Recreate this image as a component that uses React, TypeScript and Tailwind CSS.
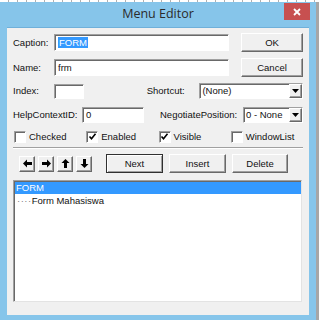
import React from 'react';

// Windows classic 3D borders
const sunken =
  'border border-t-[#a0a0a0] border-l-[#a0a0a0] border-r-white border-b-white shadow-[inset_1px_1px_0_#696969]';
const raised =
  'bg-[#f0f0f0] border border-t-white border-l-white border-r-[#696969] border-b-[#696969] shadow-[inset_-1px_-1px_0_#a0a0a0]';

const Arrow: React.FC<{ rotate: string }> = ({ rotate }) => (
  <svg width="9" height="9" viewBox="0 0 9 9" className={rotate}>
    <polygon points="0,4.5 4,0.5 4,3 9,3 9,6 4,6 4,8.5" fill="#000" />
  </svg>
);

const Combo: React.FC<{ text: string; width: string }> = ({ text, width }) => (
  <div className={`${width} h-[16px] bg-white ${sunken} flex items-center justify-between`}>
    <span className="pl-[2px]">{text}</span>
    <div className={`w-[13px] h-full ${raised} flex items-center justify-center`}>
      <svg width="7" height="4" viewBox="0 0 7 4">
        <polygon points="0,0 7,0 3.5,4" fill="#000" />
      </svg>
    </div>
  </div>
);

const Check: React.FC<{ label: string; checked?: boolean }> = ({ label, checked }) => (
  <div className="w-[74px] flex items-center gap-[3px]">
    <div className={`w-[12px] h-[12px] bg-white ${sunken} flex items-center justify-center`}>
      {checked && (
        <svg width="9" height="9" viewBox="0 0 9 9">
          <path d="M1.5 4.5 L3.5 6.8 L7.5 1.8" stroke="#000" strokeWidth="1.6" fill="none" />
        </svg>
      )}
    </div>
    <span>{label}</span>
  </div>
);

const App: React.FC = () => {
  return (
    <div className="w-[319px] h-[320px] overflow-hidden flex flex-col bg-[#a6a6a6]">
      {/* strip of desktop above the window */}
      <div className="h-[2px] bg-[repeating-linear-gradient(90deg,#ffffff_0px,#ffffff_8px,#b0b0b0_8px,#b0b0b0_9px)] shrink-0" />
      <div className="flex flex-1">
        {/* window */}
        <div className="w-[316px] bg-[#86c5ea] flex flex-col">
          {/* title bar */}
          <div className="h-[25px] grid grid-cols-[1fr_auto_1fr]">
            <div />
            <div className="flex items-center text-[12.5px] text-[#2b2b2b] font-['Open_Sans',sans-serif]">
              Menu Editor
            </div>
            <div className="flex justify-end pt-[1px] pr-[6px]">
              <div className="w-[26px] h-[17px] bg-[#c75050] flex items-center justify-center">
                <svg width="8" height="8" viewBox="0 0 8 8">
                  <path d="M1 1 L7 7 M7 1 L1 7" stroke="#fff" strokeWidth="1.8" />
                </svg>
              </div>
            </div>
          </div>

          {/* client area */}
          <div className="mx-[7px] h-[288px] bg-[#f0f0f0] border-t border-[#6fb0da] flex flex-col px-[6px] pt-[5px] text-[9.5px] leading-none text-[#111] font-['Liberation_Sans',Arial,sans-serif]">
            <div className="flex items-center h-[19px]">
              <span className="w-[41px]">Caption:</span>
              <div className={`w-[175px] h-[17px] bg-white ${sunken} flex items-center pl-[3px]`}>
                <span className="bg-[#3399ff] text-white px-[1px] py-[1px]">FORM</span>
              </div>
              <button className={`ml-auto w-[62px] h-[19px] ${raised}`}>OK</button>
            </div>

            <div className="flex items-center h-[19px] mt-[6px]">
              <span className="w-[41px]">Name:</span>
              <div className={`w-[175px] h-[17px] bg-white ${sunken} flex items-center pl-[3px]`}>frm</div>
              <button className={`ml-auto w-[62px] h-[19px] ${raised}`}>Cancel</button>
            </div>

            <div className="flex items-center h-[16px] mt-[6px]">
              <span className="w-[41px]">Index:</span>
              <div className={`w-[30px] h-[15px] bg-white ${sunken}`} />
              <span className="ml-[63px] w-[53px]">Shortcut:</span>
              <Combo text="(None)" width="w-[104px]" />
            </div>

            <div className="flex items-center h-[16px] mt-[8px]">
              <span className="w-[69px]">HelpContextID:</span>
              <div className={`w-[62px] h-[16px] bg-white ${sunken} flex items-center pl-[3px]`}>0</div>
              <span className="ml-[16px] w-[83px]">NegotiatePosition:</span>
              <Combo text="0 - None" width="w-[60px]" />
            </div>

            <div className="flex items-center h-[13px] mt-[7px] pl-[1px]">
              <Check label="Checked" />
              <Check label="Enabled" checked />
              <Check label="Visible" checked />
              <Check label="WindowList" />
            </div>

            <div className="mt-[4px] border-t border-t-[#a0a0a0] border-b border-b-white" />

            <div className="flex items-center h-[19px] mt-[5px]">
              <div className="flex gap-[3px] ml-[6px]">
                <button className={`w-[16px] h-[16px] ${raised} flex items-center justify-center`}>
                  <Arrow rotate="" />
                </button>
                <button className={`w-[16px] h-[16px] ${raised} flex items-center justify-center`}>
                  <Arrow rotate="rotate-180" />
                </button>
                <button className={`w-[16px] h-[16px] ${raised} flex items-center justify-center`}>
                  <Arrow rotate="rotate-90" />
                </button>
                <button className={`w-[16px] h-[16px] ${raised} flex items-center justify-center`}>
                  <Arrow rotate="-rotate-90" />
                </button>
              </div>
              <button className="ml-[14px] w-[57px] h-[19px] bg-[#f0f0f0] border border-[#303030] shadow-[inset_1px_1px_0_#fff,inset_-1px_-1px_0_#a0a0a0]">
                Next
              </button>
              <button className={`ml-[6px] w-[57px] h-[19px] ${raised}`}>Insert</button>
              <button className={`ml-[6px] w-[56px] h-[19px] ${raised}`}>Delete</button>
            </div>

            <div className="mt-[7px] w-[289px] h-[122px] bg-white border border-t-[#a0a0a0] border-l-[#a0a0a0] border-r-[#e3e3e3] border-b-[#e3e3e3] shadow-[inset_1px_1px_0_#696969] pt-[1px] pl-[1px]">
              <div className="h-[12px] bg-[#3399ff] text-white flex items-center pl-[1px]">FORM</div>
              <div className="h-[13px] flex items-center pl-[2px]">
                <span className="text-[#808080] tracking-[0.5px]">····</span>
                <span>Form Mahasiswa</span>
              </div>
            </div>
          </div>
        </div>
        {/* desktop on the right */}
        <div className="flex-1 bg-[#a6a6a6]" />
      </div>
    </div>
  );
};

export default App;
